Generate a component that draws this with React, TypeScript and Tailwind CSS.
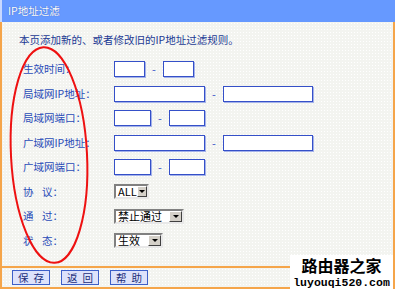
import React from "react";

const cjk = { fontFamily: '"Noto Sans CJK SC", "Liberation Sans", sans-serif' };

function Box({ w }: { w: string }) {
  return <div className={`${w} h-[16px] bg-white border border-[#3550c8] shadow-[1px_1px_0_#a4b2ea]`} />;
}

function Select({ label, w }: { label: string; w: string }) {
  return (
    <div className={`${w} h-[15px] flex bg-white border-2 border-t-[#808080] border-l-[#808080] border-r-[#e8e8e8] border-b-[#e8e8e8]`}>
      <span className="flex-1 pl-[2px] text-[11px] leading-[11px] text-black">{label}</span>
      <span className="w-[13px] h-[11px] bg-[#d4d0c8] border border-t-white border-l-white border-r-[#404040] border-b-[#404040] flex items-center justify-center">
        <span className="w-0 h-0 border-x-[3px] border-x-transparent border-t-[3px] border-t-black" />
      </span>
    </div>
  );
}

const Dash = () => <span className="text-[#3550c8] text-[11px] px-[7px]">-</span>;

// two-character labels are spread with a wide gap
function Spread({ a, b }: { a: string; b: string }) {
  return (
    <span className="flex gap-[8.5px]">
      <span>{a}</span>
      <span>{b}</span>
    </span>
  );
}

const rows: { label: React.ReactNode; field: React.ReactNode }[] = [
  { label: "生效时间：", field: <><Box w="w-[31px]" /><Dash /><Box w="w-[31px]" /></> },
  { label: "局域网IP地址：", field: <><Box w="w-[91px]" /><Dash /><Box w="w-[90px]" /></> },
  { label: "局域网端口：", field: <><Box w="w-[37px]" /><Dash /><Box w="w-[36px]" /></> },
  { label: "广域网IP地址：", field: <><Box w="w-[91px]" /><Dash /><Box w="w-[90px]" /></> },
  { label: "广域网端口：", field: <><Box w="w-[37px]" /><Dash /><Box w="w-[36px]" /></> },
  { label: <Spread a="协" b="议：" />, field: <Select label="ALL" w="w-[35px]" /> },
  { label: <Spread a="通" b="过：" />, field: <Select label="禁止通过" w="w-[70px]" /> },
  { label: <Spread a="状" b="态：" />, field: <Select label="生效" w="w-[49px]" /> },
];

export default function App() {
  return (
    <div className="relative w-[397px] h-[291px] bg-white overflow-hidden" style={cjk}>
      <div className="flex flex-col h-full pr-[2px]">
        <div className="h-[22px] bg-[#6699ff] border-l-2 border-[#c8d8ff] flex items-center pl-[6px] text-white text-[10.5px] [text-shadow:0_0_1px_#3355aa]">
          IP地址过滤
        </div>
        <div className="flex-1 flex flex-col bg-[#f3f4f0] bg-[radial-gradient(#ffffff_0.6px,transparent_0.7px)] bg-[length:3px_3px] border-x-2 border-b-2 border-[#f5a54a] mb-[2px]">
          <p className="pl-[17px] pt-[10px] h-[35px] text-[10.5px] text-[#1c3a94]">本页添加新的、或者修改旧的IP地址过滤规则。</p>
          <div className="flex flex-col">
            {rows.map((r, i) => (
              <div key={i} className="h-[24.5px] flex items-center">
                <span className="w-[112px] pl-[21px] text-[10.5px] text-[#2a4cb8]">{r.label}</span>
                <div className="flex items-center">{r.field}</div>
              </div>
            ))}
          </div>
          <div className="mt-auto border-t-2 border-[#f5a54a] h-[21px] flex items-center gap-[11px] pl-[10px]">
            {[["保", "存"], ["返", "回"], ["帮", "助"]].map(([a, b]) => (
              <button key={a} className="w-[38px] h-[15px] bg-[#dde2fb] border border-[#3d5fc8] text-[10.5px] leading-[13px] text-[#1c2e7a] flex items-center justify-center gap-[5px]">
                <span>{a}</span>
                <span>{b}</span>
              </button>
            ))}
          </div>
        </div>
      </div>
      <svg className="absolute left-0 top-0" width="397" height="291">
        <ellipse cx="49" cy="155" rx="38" ry="108" fill="none" stroke="#ee1111" strokeWidth="2" transform="rotate(-3 49 155)" />
      </svg>
      <div className="absolute left-[290px] top-[255px] w-[103px] h-[36px] bg-white flex flex-col items-center pt-[1px]">
        <span className="text-[16px] leading-[18px] font-bold text-black">路由器之家</span>
        <span className="text-[11.5px] leading-[14px] font-bold text-black mt-[2px]" style={{ fontFamily: '"Liberation Mono", monospace' }}>luyouqi520.com</span>
      </div>
    </div>
  );
}
